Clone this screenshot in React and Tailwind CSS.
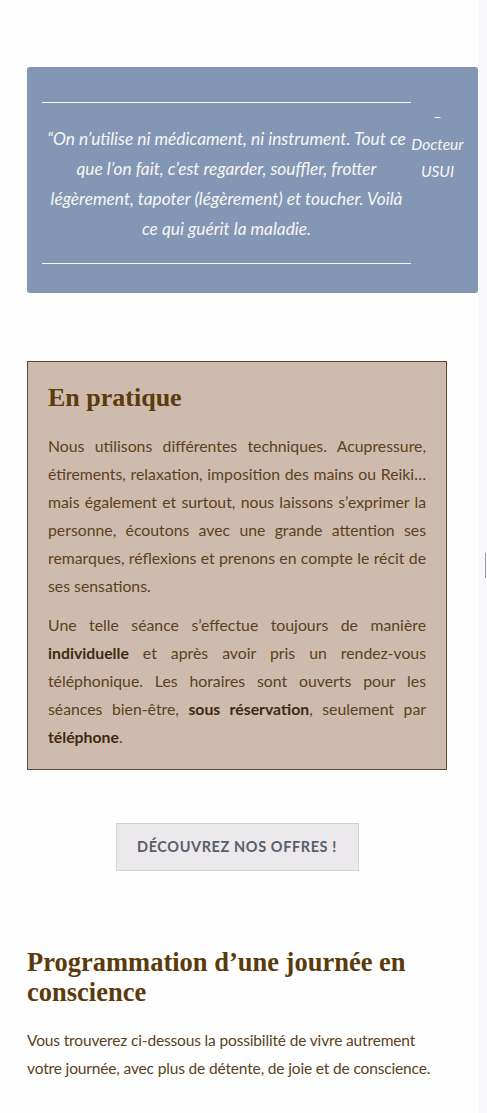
import React from 'react';

const sans = { fontFamily: 'Lato, "Open Sans", sans-serif' };
const serif = { fontFamily: '"Liberation Serif", "DejaVu Serif", serif' };

export default function App() {
    return (
        <div className="flex min-h-[1113px] w-full bg-[#fefefe]">
            <main className="flex-1 pl-[27px] pt-[67px] pb-[40px]" style={sans}>

                {/* ── QUOTE ─────────────────────────────────────────── */}
                <div className="w-[451px] rounded-[3px] bg-[#8396b3] pt-[35px] pl-[15px] pb-[29px] flex">
                    <blockquote className="w-[369px] border-y border-white/90 pt-[21px] pb-[19px] text-center text-[17.3px] italic leading-[30px] text-[#f6f6f6]">
                        “On n’utilise ni médicament, ni instrument. Tout ce que l’on fait, c’est regarder, souffler, frotter légèrement, tapoter (légèrement) et toucher. Voilà ce qui guérit la maladie.
                    </blockquote>
                    <cite className="flex-1 pt-[1px] pr-[14px] text-center text-[15.5px] italic leading-[27.5px] text-[#f6f6f6]">
                        –<br />Docteur<br />USUI
                    </cite>
                </div>

                {/* ── EN PRATIQUE ───────────────────────────────────── */}
                <div className="mt-[68px] w-[420px] border border-[#5e4636] bg-[#cfbbad] px-[20px] pt-[21px] pb-[18px]">
                    <h2 className="text-[26px] font-bold leading-[30px] text-[#5b3a0b]" style={serif}>En pratique</h2>
                    <div className="mt-[19px] space-y-[11px] text-justify text-[15.8px] leading-[28px] text-[#5b4122]">
                        <p>
                            Nous utilisons différentes techniques. Acupressure, étirements, relaxation, imposition des mains ou Reiki… mais également et surtout, nous laissons s’exprimer la personne, écoutons avec une grande attention ses remarques, réflexions et prenons en compte le récit de ses sensations.
                        </p>
                        <p>
                            Une telle séance s’effectue toujours de manière <strong className="font-bold text-[#3e2a12]">individuelle</strong> et après avoir pris un rendez-vous téléphonique. Les horaires sont ouverts pour les séances bien-être, <strong className="font-bold text-[#3e2a12]">sous réservation</strong>, seulement par <strong className="font-bold text-[#3e2a12]">téléphone</strong>.
                        </p>
                    </div>
                </div>

                {/* ── CTA ───────────────────────────────────────────── */}
                <div className="mt-[53px] flex w-[420px] justify-center">
                    <button className="h-[48px] w-[243px] border border-[#d2d2d4] bg-[#ebe9ec] text-[14.5px] font-bold tracking-[0.6px] text-[#595d68]">
                        DÉCOUVREZ NOS OFFRES !
                    </button>
                </div>

                {/* ── PROGRAMMATION ─────────────────────────────────── */}
                <div className="mt-[76px] w-[420px]">
                    <h2 className="text-[26.5px] font-bold leading-[30px] text-[#5b3a0b]" style={serif}>
                        Programmation d’une journée en conscience
                    </h2>
                    <p className="mt-[19px] text-[15.5px] tracking-[-0.15px] leading-[28px] text-[#5b4122]">
                        Vous trouverez ci-dessous la possibilité de vivre autrement votre journée, avec plus de détente, de joie et de conscience.
                    </p>
                </div>
            </main>

            <aside className="w-[8px] shrink-0 bg-[#f7f7fc] pt-[553px]">
                <div className="ml-[6px] h-[25px] w-px bg-[#9a9aa0]"></div>
            </aside>
        </div>
    );
}
